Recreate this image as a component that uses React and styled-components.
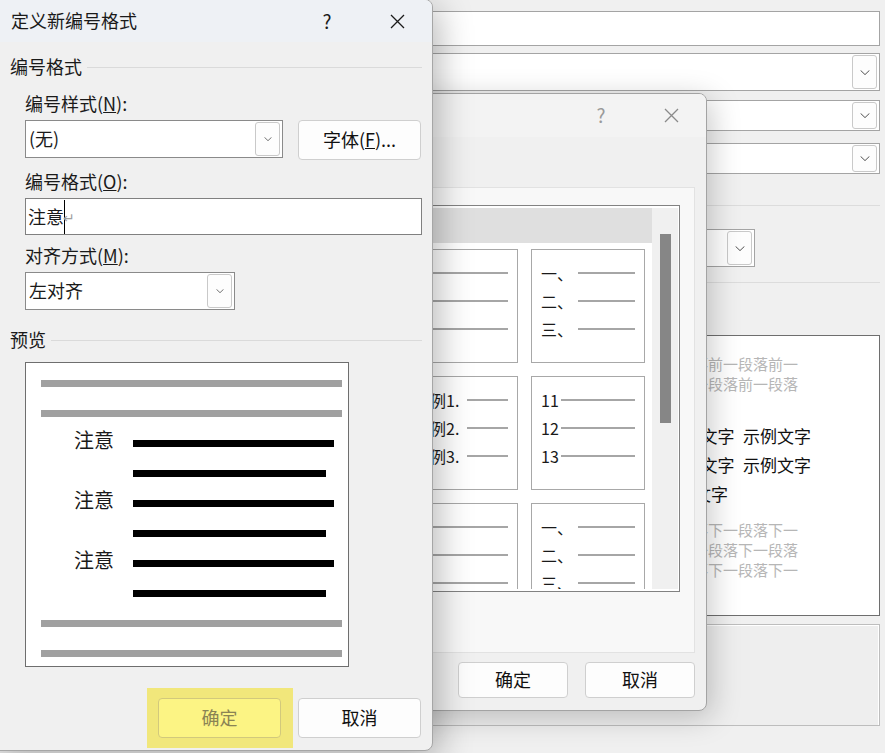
import React from 'react';
import styled, { createGlobalStyle } from 'styled-components';

const GlobalStyle = createGlobalStyle`
  html, body {
    margin: 0;
    padding: 0;
    background: #f0f0f0;
  }
  body {
    font-family: "Noto Sans CJK SC", "Noto Sans", sans-serif;
    color: #1a1a1a;
    line-height: 1.3;
  }
`;

// desktop holding the three stacked windows
const Desktop = styled.div`
  position: relative;
  width: 885px;
  height: 753px;
  overflow: hidden;
  background: #f0f0f0;
`;

/* ---------- shared bits ---------- */

const Chevron = ({ w = 10 }) => (
  <svg width={w} height={Math.round(w / 2)} viewBox="0 0 10 5">
    <path d="M0.6 0.4L5 4.6L9.4 0.4" fill="none" stroke="#505050" strokeWidth="1" />
  </svg>
);

const CloseIcon = ({ color }) => (
  <svg width="15" height="15" viewBox="0 0 15 15">
    <path d="M1 1L14 14M14 1L1 14" stroke={color} strokeWidth="1.3" />
  </svg>
);

const Combo = styled.div`
  box-sizing: border-box;
  display: flex;
  align-items: stretch;
  width: ${(p) => p.$w}px;
  height: ${(p) => p.$h}px;
  padding: 1px 2px 1px 2px;
  background: #fff;
  border: 1px solid ${(p) => (p.$soft ? '#a4a4a4' : '#8a8a8a')};
  font-size: 18px;
  margin-top: ${(p) => p.$mt || 0}px;
  margin-right: ${(p) => p.$mr || 0}px;
`;

const ComboText = styled.div`
  flex: 1;
  display: flex;
  align-items: center;
  padding-left: 1px;
`;

const DropButton = styled.div`
  box-sizing: border-box;
  width: 25px;
  border: 1px solid #c9c9c9;
  border-radius: 3px;
  background: #fdfdfd;
  display: flex;
  align-items: center;
  justify-content: center;
`;

const PushButton = styled.div`
  box-sizing: border-box;
  width: ${(p) => p.$w}px;
  height: ${(p) => p.$h}px;
  display: flex;
  align-items: center;
  justify-content: center;
  font-size: 18px;
  border-radius: 4px;
  border: 1px solid ${(p) => (p.$marked ? '#d2c97c' : '#cfcfcf')};
  background: ${(p) => (p.$marked ? '#fcf484' : '#fdfdfd')};
  color: ${(p) => (p.$marked ? '#8a8354' : '#111')};
`;

const TitleBar = styled.div`
  flex-shrink: 0;
  display: flex;
  align-items: center;
  height: ${(p) => p.$h}px;
  padding-left: 20px;
  background: ${(p) => (p.$active ? '#eef1f5' : '#f3f3f3')};
  font-size: 18px;
`;

const TitleText = styled.div`
  flex: 1;
`;

const TitleButton = styled.div`
  width: 70px;
  height: 100%;
  display: flex;
  align-items: center;
  justify-content: center;
  font-size: 19px;
  color: ${(p) => (p.$active ? '#1a1a1a' : '#9a9a9a')};
`;

/* ---------- back window (paragraph settings) ---------- */

const BackWindow = styled.div`
  position: absolute;
  inset: 0;
  box-sizing: border-box;
  padding: 11px 5px 0 0;
  display: flex;
  flex-direction: column;
  align-items: flex-end;
  background: #f0f0f0;
`;

const BackField = styled.div`
  box-sizing: border-box;
  width: 700px;
  height: 35px;
  background: #fff;
  border: 1px solid #a4a4a4;
`;

const Separator = styled.div`
  width: 700px;
  height: 1px;
  background: #dcdcdc;
  margin-top: ${(p) => p.$mt}px;
`;

const BgPreview = styled.div`
  box-sizing: border-box;
  width: 700px;
  height: 281px;
  margin-top: 52px;
  padding-top: 18px;
  background: #fff;
  border: 1px solid #6e6e6e;
  overflow: hidden;
`;

const SampleLine = styled.div`
  white-space: nowrap;
  text-align: right;
  font-size: ${(p) => (p.$ghost ? 15 : 17)}px;
  line-height: ${(p) => (p.$ghost ? 20 : 29)}px;
  color: ${(p) => (p.$ghost ? '#b6b6b6' : '#111')};
  padding-right: ${(p) => p.$end}px;
  margin-top: ${(p) => p.$mt || 0}px;
`;

const BottomPanel = styled.div`
  box-sizing: border-box;
  width: 700px;
  height: 102px;
  margin-top: 8px;
  background: #eeeeee;
  border: 1px solid #bdbdbd;
  box-shadow: inset 0 1px 0 #fff, inset -1px 0 0 #fff;
`;

/* ---------- middle window (numbering library) ---------- */

const ListDialog = styled.div`
  position: absolute;
  left: 290px;
  top: 93px;
  width: 417px;
  height: 618px;
  box-sizing: border-box;
  display: flex;
  flex-direction: column;
  overflow: hidden;
  background: #f0f0f0;
  border: 1px solid #a3a3a3;
  border-radius: 8px;
  box-shadow: 4px 6px 30px rgba(0, 0, 0, 0.22);
`;

const DialogBody = styled.div`
  flex: 1;
  display: flex;
  flex-direction: column;
  padding: 0 11px 12px 11px;
`;

const LibraryPanel = styled.div`
  box-sizing: border-box;
  height: 466px;
  margin-top: 50px;
  padding: 17px 14px 0 0;
  display: flex;
  justify-content: flex-end;
  align-items: flex-start;
  background: #f8f8f8;
  border: 1px solid #e2e2e2;
`;

const ListBox = styled.div`
  box-sizing: border-box;
  width: 283px;
  height: 387px;
  padding: 2px 1px 2px 2px;
  display: flex;
  overflow: hidden;
  background: #fff;
  border: 1px solid #828282;
`;

const ListContent = styled.div`
  flex: 1;
  display: flex;
  flex-direction: column;
  overflow: hidden;
`;

const ListHeader = styled.div`
  height: 35px;
  flex-shrink: 0;
  background: #dfdfdf;
`;

const CardGrid = styled.div`
  display: grid;
  grid-template-columns: 114px 114px;
  gap: 13px;
  padding: 6px 0 0 4px;
`;

const Card = styled.div`
  box-sizing: border-box;
  height: 114px;
  padding: 9px 9px 0;
  display: flex;
  flex-direction: column;
  background: #fff;
  border: 1px solid #a8a8a8;
`;

const CardRow = styled.div`
  height: 28px;
  display: flex;
  align-items: center;
  font-size: 16px;
  line-height: 1;
  white-space: nowrap;
`;

const CardLine = styled.div`
  flex: 1;
  height: 2px;
  background: #a6a6a6;
  margin-left: ${(p) => p.$gap || 0}px;
`;

const ScrollTrack = styled.div`
  width: 26px;
  flex-shrink: 0;
  display: flex;
  justify-content: center;
  background: #f0f0f0;
`;

const ScrollThumb = styled.div`
  width: 11px;
  height: 189px;
  margin-top: 26px;
  background: #868686;
`;

const ButtonBar = styled.div`
  display: flex;
  justify-content: flex-end;
  align-items: center;
  gap: ${(p) => p.$gap}px;
  margin-top: ${(p) => p.$mt}px;
  margin-right: ${(p) => p.$mr || 0}px;
`;

/* ---------- front window (define new number format) ---------- */

const FormatDialog = styled.div`
  position: absolute;
  left: -10px;
  top: -1px;
  width: 443px;
  height: 752px;
  box-sizing: border-box;
  display: flex;
  flex-direction: column;
  overflow: hidden;
  background: #f0f0f0;
  border: 1px solid #a6a6a6;
  border-radius: 8px;
  box-shadow: 6px 8px 34px rgba(0, 0, 0, 0.28);
`;

const FormBody = styled.div`
  display: flex;
  flex-direction: column;
  padding: 0 10px 0 19px;
`;

const GroupHeader = styled.div`
  display: flex;
  align-items: center;
  gap: 5px;
  height: 24px;
  font-size: 18px;
  margin-top: ${(p) => p.$mt}px;

  &::after {
    content: '';
    flex: 1;
    height: 1px;
    background: #dadada;
  }
`;

const FieldLabel = styled.div`
  font-size: 18px;
  line-height: 24px;
  margin: ${(p) => p.$mt}px 0 0 15px;
`;

const FieldRow = styled.div`
  display: flex;
  align-items: flex-start;
  gap: 15px;
  margin: 5px 0 0 15px;
`;

const TextInput = styled.div`
  box-sizing: border-box;
  height: 37px;
  margin: 5px 0 0 15px;
  padding-left: 2px;
  display: flex;
  align-items: center;
  background: #fff;
  border: 1px solid #808080;
  font-size: 18px;
`;

const Caret = styled.span`
  display: inline-block;
  width: 1px;
  height: 34px;
  background: #000;
`;

const ReturnMark = styled.span`
  font-family: "DejaVu Sans", sans-serif;
  font-size: 14px;
  line-height: 1;
  color: #a0a0a0;
  margin: 2px 0 0 -2px;
`;

const PreviewBox = styled.div`
  box-sizing: border-box;
  width: 324px;
  height: 305px;
  margin: 10px 0 0 15px;
  padding: 17px 0 0 15px;
  display: flex;
  flex-direction: column;
  gap: 23px;
  background: #fff;
  border: 1px solid #6e6e6e;
`;

const BarRow = styled.div`
  height: 7px;
  display: flex;
  align-items: center;
`;

const Bar = styled.div`
  height: 7px;
  width: ${(p) => p.$w}px;
  margin-left: ${(p) => p.$indent || 0}px;
  background: ${(p) => (p.$dark ? '#000' : '#a0a0a0')};
`;

const NumLabel = styled.span`
  box-sizing: border-box;
  width: 92px;
  padding-left: 33px;
  margin-top: -8px;
  font-size: 20px;
  line-height: 20px;
`;

const Highlight = styled.div`
  padding: 10px 12px 10px 11px;
  background: #f1e77b;
`;

const ComboBox = ({ text, w, h, small, soft, mt, mr }) => (
  <Combo $w={w} $h={h} $soft={soft} $mt={mt} $mr={mr}>
    <ComboText>{text}</ComboText>
    <DropButton>
      <Chevron w={small ? 8 : 10} />
    </DropButton>
  </Combo>
);

const LibraryCard = ({ labels, gap }) => (
  <Card>
    {[0, 1, 2].map((i) => (
      <CardRow key={i}>
        {labels && labels[i]}
        <CardLine $gap={labels ? gap : 0} />
      </CardRow>
    ))}
  </Card>
);

const previewRows = [
  { kind: 'grey' },
  { kind: 'grey' },
  { kind: 'num' },
  { kind: 'wrap' },
  { kind: 'num' },
  { kind: 'wrap' },
  { kind: 'num' },
  { kind: 'wrap' },
  { kind: 'grey' },
  { kind: 'grey' },
];

const App = () => {
  const chinese = ['一、', '二、', '三、'];

  return (
    <Desktop>
      <GlobalStyle />

      <BackWindow>
        <BackField />
        <ComboBox w={700} h={38} mt={7} soft />
        <ComboBox w={700} h={31} mt={9} soft />
        <ComboBox w={700} h={31} mt={12} soft />
        <Separator $mt={31} />
        <ComboBox w={300} h={38} mt={23} mr={125} soft />
        <Separator $mt={15} />
        <BgPreview>
          <SampleLine $ghost $end={81}>前一段落前一段落前一段落前一</SampleLine>
          <SampleLine $ghost $end={81}>段落前一段落前一段落前一段落</SampleLine>
          <SampleLine $end={68} $mt={27}>示例文字&#8194;示例文字&#8194;示例文字</SampleLine>
          <SampleLine $end={68}>示例文字&#8194;示例文字&#8194;示例文字</SampleLine>
          <SampleLine $end={151}>示例文字&#8194;示例文字</SampleLine>
          <SampleLine $ghost $end={81} $mt={12}>下一段落下一段落下一段落下一</SampleLine>
          <SampleLine $ghost $end={81}>段落下一段落下一段落下一段落</SampleLine>
          <SampleLine $ghost $end={81}>下一段落下一段落下一段落下一</SampleLine>
        </BgPreview>
        <BottomPanel />
      </BackWindow>

      <ListDialog>
        <TitleBar $h={43}>
          <TitleText />
          <TitleButton>?</TitleButton>
          <TitleButton>
            <CloseIcon color="#8a8a8a" />
          </TitleButton>
        </TitleBar>
        <DialogBody>
          <LibraryPanel>
            <ListBox>
              <ListContent>
                <ListHeader />
                <CardGrid>
                  <LibraryCard />
                  <LibraryCard labels={chinese} gap={5} />
                  <LibraryCard labels={['示例1.', '示例2.', '示例3.']} gap={8} />
                  <LibraryCard labels={['11', '12', '13']} gap={2} />
                  <LibraryCard />
                  <LibraryCard labels={chinese} gap={5} />
                </CardGrid>
              </ListContent>
              <ScrollTrack>
                <ScrollThumb />
              </ScrollTrack>
            </ListBox>
          </LibraryPanel>
          <ButtonBar $gap={17} $mt={9}>
            <PushButton $w={110} $h={36}>确定</PushButton>
            <PushButton $w={110} $h={36}>取消</PushButton>
          </ButtonBar>
        </DialogBody>
      </ListDialog>

      <FormatDialog>
        <TitleBar $h={42} $active>
          <TitleText>定义新编号格式</TitleText>
          <TitleButton $active>?</TitleButton>
          <TitleButton $active>
            <CloseIcon color="#1a1a1a" />
          </TitleButton>
        </TitleBar>
        <FormBody>
          <GroupHeader $mt={13}>编号格式</GroupHeader>
          <FieldLabel $mt={12}>
            编号样式(<u>N</u>):
          </FieldLabel>
          <FieldRow>
            <ComboBox text="(无)" w={258} h={38} small />
            <PushButton $w={123} $h={40}>
              字体(<u>F</u>)...
            </PushButton>
          </FieldRow>
          <FieldLabel $mt={9}>
            编号格式(<u>O</u>):
          </FieldLabel>
          <TextInput>
            注意
            <Caret />
            <ReturnMark>↵</ReturnMark>
          </TextInput>
          <FieldLabel $mt={8}>
            对齐方式(<u>M</u>):
          </FieldLabel>
          <FieldRow>
            <ComboBox text="左对齐" w={210} h={38} small />
          </FieldRow>
          <GroupHeader $mt={18}>预览</GroupHeader>
          <PreviewBox>
            {previewRows.map((row, i) => (
              <BarRow key={i}>
                {row.kind === 'grey' && <Bar $w={301} />}
                {row.kind === 'num' && (
                  <>
                    <NumLabel>注意</NumLabel>
                    <Bar $w={201} $dark />
                  </>
                )}
                {row.kind === 'wrap' && <Bar $w={193} $indent={92} $dark />}
              </BarRow>
            ))}
          </PreviewBox>
          <ButtonBar $gap={5} $mt={21} $mr={1}>
            <Highlight>
              <PushButton $w={123} $h={40} $marked>确定</PushButton>
            </Highlight>
            <PushButton $w={123} $h={40}>取消</PushButton>
          </ButtonBar>
        </FormBody>
      </FormatDialog>
    </Desktop>
  );
};

export default App;
